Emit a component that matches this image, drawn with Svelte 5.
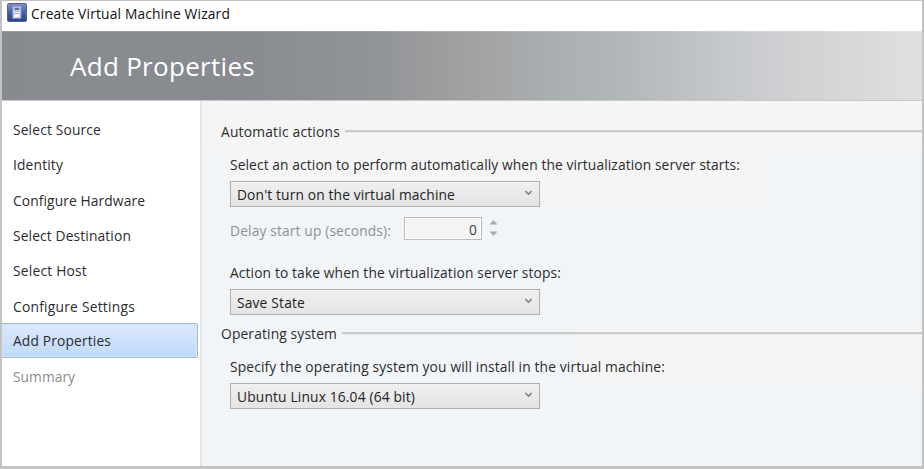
<script>
  const steps = [
    { label: 'Select Source', width: 88 },
    { label: 'Identity', width: 50 },
    { label: 'Configure Hardware', width: 132 },
    { label: 'Select Destination', width: 118 },
    { label: 'Select Host', width: 74 },
    { label: 'Configure Settings', width: 122 },
    { label: 'Add Properties', width: 98, current: true },
    { label: 'Summary', width: 62, disabled: true }
  ];

  // Spreads the letters so that a label takes the given width.
  function fit(node, width) {
    const apply = () => {
      node.style.letterSpacing = '0';
      const natural = node.getBoundingClientRect().width;
      node.style.letterSpacing = `${(width - natural) / node.textContent.length}px`;
    };
    apply();
    document.fonts?.ready.then(apply);
  }
</script>

{#snippet combo(text, width)}
  <div class="combo">
    <span use:fit={width}>{text}</span>
    <svg width="9" height="6" viewBox="0 0 9 6"><path d="M1.4 1 4.5 4.2 7.6 1" fill="none" stroke="#7c7c7c" stroke-width="1.6" /></svg>
  </div>
{/snippet}

<div class="window">
  <div class="titlebar">
    <svg width="20" height="20" viewBox="0 0 20 20">
      <defs>
        <linearGradient id="tile" x1="0" y1="0" x2="0" y2="1">
          <stop offset="0" stop-color="#7f93c6" />
          <stop offset=".5" stop-color="#4760a6" />
          <stop offset="1" stop-color="#303d86" />
        </linearGradient>
      </defs>
      <rect x=".5" y=".5" width="19" height="18" rx="1.5" fill="url(#tile)" stroke="#5262a0" />
      <rect x="5.8" y="3.3" width="8.2" height="12" fill="#c9d2ea" stroke="#8b9aca" stroke-width=".8" />
      <rect x="7.5" y="4.8" width="4.8" height="2" fill="#5669aa" />
      <rect x="7.5" y="8" width="4.8" height="6" fill="#f6f8fd" />
      <path d="M7.5 8.2h4.8M7.5 10.5h4.8" stroke="#8292c4" stroke-width=".8" />
    </svg>
    <span use:fit={199}>Create Virtual Machine Wizard</span>
  </div>
  <header><span use:fit={185}>Add Properties</span></header>
  <div class="body">
    <nav>
      {#each steps as step}
        <div class="step" class:current={step.current} class:disabled={step.disabled}>
          <span use:fit={step.width}>{step.label}</span>
        </div>
      {/each}
    </nav>
    <main>
      <div class="group"><span use:fit={119}>Automatic actions</span><i></i></div>
      <div class="label l1"><span use:fit={510}>Select an action to perform automatically when the virtualization server starts:</span></div>
      {@render combo("Don't turn on the virtual machine", 218)}
      <div class="delay">
        <span use:fit={161}>Delay start up (seconds):</span>
        <div class="number">0</div>
        <svg width="9" height="18" viewBox="0 0 9 18"><path d="M.5 5.5 4.5 1l4 4.5zM.5 12.5l4 4.5 4-4.5z" fill="#a9abad" /></svg>
      </div>
      <div class="label l2"><span use:fit={331}>Action to take when the virtualization server stops:</span></div>
      {@render combo('Save State', 68)}
      <div class="group second"><span use:fit={116}>Operating system</span><i></i></div>
      <div class="label l3"><span use:fit={435}>Specify the operating system you will install in the virtual machine:</span></div>
      {@render combo('Ubuntu Linux 16.04 (64 bit)', 178)}
    </main>
  </div>
</div>

<style>
  .window {
    box-sizing: border-box;
    width: 924px;
    height: 469px;
    border: solid #c3c3c3;
    border-width: 1px 2px 3px 2px;
    display: flex;
    flex-direction: column;
    overflow: hidden;
    background: #fff;
    font: 13.8px/20px "Open Sans", "Noto Sans", sans-serif;
    color: #2c2c2f;
  }
  span {
    white-space: nowrap;
    flex: none;
  }
  svg {
    flex: none;
    display: block;
  }
  .titlebar {
    height: 30px;
    flex: none;
    display: flex;
    align-items: flex-start;
    padding: 2px 0 0 5px;
    box-sizing: border-box;
    gap: 4px;
    color: #111;
  }
  .titlebar span {
    margin-top: 1px;
  }
  header {
    height: 70px;
    flex: none;
    box-sizing: border-box;
    border-top: 1px solid rgba(255, 255, 255, .15);
    border-bottom: 1px solid #c9cacb;
    padding: 16px 0 0 68px;
    font-size: 26px;
    line-height: 36px;
    color: #fff;
    background: linear-gradient(90deg, #878a8e 0, #888b8f 240px, #929598 380px, #a3a3a3 480px, #a8adb0 540px, #b0b5b8 610px, #c3c6c9 710px, #d2d3d5 810px, #dfe0e2 920px);
  }
  .body {
    flex: 1;
    display: flex;
    min-height: 0;
  }
  nav {
    width: 198px;
    flex: none;
    border-right: 2px solid #e5e6e8;
    padding-top: 11px;
  }
  .step {
    height: 35.3px;
    box-sizing: border-box;
    display: flex;
    align-items: center;
    padding: 1px 0 0 11px;
    width: 196px;
  }
  .current {
    height: 35px;
    margin: -1px 0 1.3px;
    border: 1px solid #9dbadf;
    border-left: 0;
    border-radius: 0 2px 2px 0;
    background: linear-gradient(#dce9fb, #c0d9fa);
    box-shadow: inset 0 0 0 1px #d4e4fa;
    padding-top: 2px;
  }
  .disabled {
    color: #8c8c8e;
  }
  main {
    flex: 1;
    min-width: 0;
    padding: 20px 0 0 19px;
    background:
      linear-gradient(#f5f5f5, #f5f5f5) 0 0 / 100% 48px no-repeat,
      linear-gradient(#f5f5f5, #f5f5f5) 28px 48px / 532px 62px no-repeat,
      linear-gradient(#f5f5f5, #f5f5f5) 370px 226px / 350px 60px no-repeat,
      #f1f5f8;
  }
  .group {
    display: flex;
    align-items: center;
    gap: 5px;
    height: 20px;
  }
  .group span {
    padding-top: 2px;
  }
  .group i {
    flex: 1;
    height: 2px;
    background: #c9caca;
    border-bottom: 1px solid #e6e7e7;
  }
  .label {
    height: 20px;
    padding-left: 9px;
  }
  .l1 {
    margin: 14px 0 6px;
  }
  .l2 {
    margin: 23px 0 6px;
  }
  .l3 {
    margin: 14px 0 6px;
  }
  .combo {
    box-sizing: border-box;
    width: 310px;
    height: 26px;
    margin-left: 8.6px;
    padding: 0 6px 0 6.4px;
    display: flex;
    align-items: center;
    justify-content: space-between;
    border: 1px solid #adb0b2;
    background: linear-gradient(#f0f0f0, #e4e4e4);
    color: #232326;
  }
  .combo span {
    padding-top: 1px;
  }
  .combo svg {
    margin-bottom: 3px;
  }
  .delay {
    display: flex;
    align-items: center;
    height: 24px;
    margin: 9px 0 0 9px;
    color: #8f9092;
  }
  .delay span {
    margin-top: 6px;
  }
  .number {
    box-sizing: border-box;
    width: 78px;
    height: 23px;
    margin: 0 7px 0 13px;
    padding-right: 4px;
    line-height: 23px;
    text-align: right;
    border: 1px solid #b9bcbe;
    background: #f5f5f5;
    box-shadow: inset 0 0 0 1px #fff;
    color: #444;
  }
  .second {
    margin-top: 8px;
  }
</style>
